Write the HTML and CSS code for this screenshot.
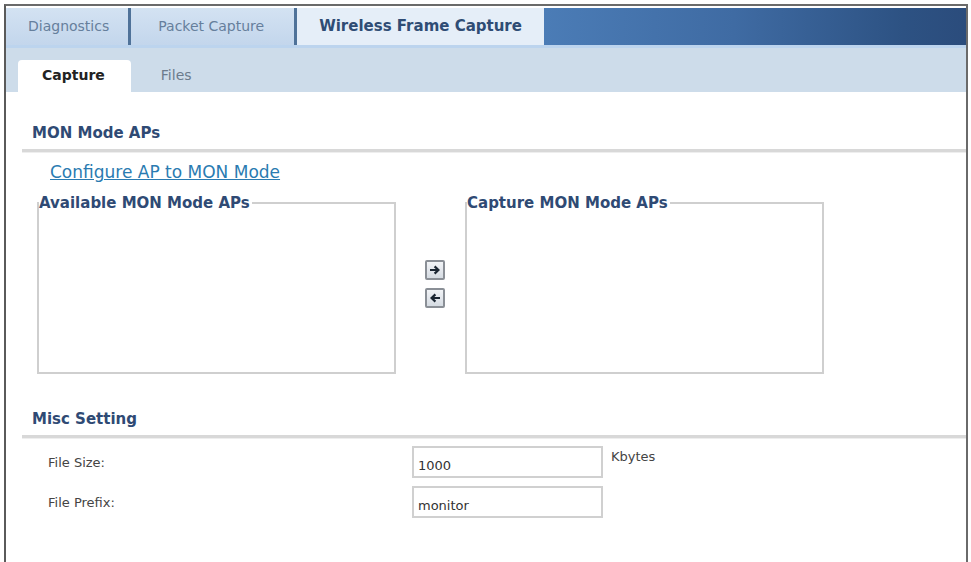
FILE: index.html
```html
<!DOCTYPE html>
<html lang="en">
<head>
  <meta charset="UTF-8">
  <title>Wireless Frame Capture</title>
  <link rel="stylesheet" href="styles.css">
</head>
<body>
  <div class="frame">
    <div class="tabs">
      <div class="tab">Diagnostics</div>
      <div class="tab tab-second">Packet Capture</div>
      <div class="tab active">Wireless Frame Capture</div>
      <div class="tab-fill"></div>
    </div>
    <div class="subtabs">
      <div class="subtab active">Capture</div>
      <div class="subtab">Files</div>
    </div>

    <div class="content">
      <h2 class="section">MON Mode APs</h2>
      <a href="#" class="link">Configure AP to MON Mode</a>

      <div class="lists">
        <fieldset class="list">
          <legend>Available MON Mode APs</legend>
        </fieldset>
        <div class="movers">
          <button class="mover" title="Add">
            <svg width="12" height="10" viewBox="0 0 12 10"><path d="M1 5h8M5.6 1.4L9.4 5 5.6 8.6" fill="none" stroke="#1c2733" stroke-width="2.2"/></svg>
          </button>
          <button class="mover" title="Remove">
            <svg width="12" height="10" viewBox="0 0 12 10"><path d="M11 5H3M6.4 1.4L2.6 5 6.4 8.6" fill="none" stroke="#1c2733" stroke-width="2.2"/></svg>
          </button>
        </div>
        <fieldset class="list">
          <legend>Capture MON Mode APs</legend>
        </fieldset>
      </div>

      <h2 class="section misc">Misc Setting</h2>
      <div class="row first">
        <label class="label">File Size:</label>
        <input class="field" type="text" value="1000">
        <span class="unit">Kbytes</span>
      </div>
      <div class="row">
        <label class="label">File Prefix:</label>
        <input class="field" type="text" value="monitor">
      </div>
    </div>
  </div>
</body>
</html>
```
FILE: styles.css
```css
body {
  margin: 0;
  padding: 4px 0 0 4px;
  background-color: white;
  font-family: 'DejaVu Sans', sans-serif;
  color: #333;
  overflow: hidden;
}
.frame {
  width: 964px;
  height: 558px;
  box-sizing: border-box;
  border-left: 2px solid #5a5a5a;
  border-top: 2px solid #6a6a6a;
  border-right: 2px solid #6a6a6a;
}
.tabs {
  display: flex;
  height: 37px;
  margin-top: 2px;
  background-color: #c7d9ed;
  border-bottom: 3px solid #bcd4ee;
}
.tab {
  padding: 0 19px 0 22px;
  line-height: 37px;
  font-size: 14px;
  color: #667f9c;
  background: linear-gradient(#d3e2f2, #c3d6ec);
  border-right: 3px solid #4f7299;
}
.tab-second {
  padding: 0 30px 0 27px;
}
.tab.active {
  padding: 0 22px;
  font-weight: bold;
  font-size: 15px;
  color: #2f4c74;
  background: #e5eef8;
  border-right: none;
}
.tab-fill {
  flex: 1;
  background: linear-gradient(to right, #4b7cb6, #3f6ba3 45%, #2d5283 85%, #2b4c7c);
}
.subtabs {
  display: flex;
  align-items: flex-end;
  height: 44px;
  background-color: #cddcea;
}
.subtab {
  padding: 0 30px;
  height: 32px;
  line-height: 30px;
  font-size: 14px;
  color: #6b7b8c;
}
.subtab.active {
  margin-left: 12px;
  padding: 0 26px 0 24px;
  background-color: white;
  border-radius: 4px 4px 0 0;
  font-weight: bold;
  color: #222;
}
.content {
  padding: 32px 0 0 16px;
}
.section {
  margin: 0;
  padding: 0 0 7px 10px;
  font-size: 15px;
  line-height: 18px;
  color: #2f4a74;
  border-bottom: 3px solid #d8d8d8;
  box-shadow: 0 1px 0 #eee;
}
.link {
  display: inline-block;
  margin: 10px 0 0 28px;
  font-size: 17px;
  line-height: 20px;
  color: #2a7bb1;
}
.lists {
  display: flex;
  align-items: center;
  margin: 12px 0 0 15px;
}
.list {
  width: 359px;
  height: 180px;
  margin: 0;
  padding: 0;
  box-sizing: border-box;
  border: 2px solid #cfcfcf;
}
.list legend {
  margin-left: 0;
  padding: 0 2px 0 0;
  font-size: 15px;
  line-height: 18px;
  font-weight: bold;
  color: #2f4a74;
}
.movers {
  display: flex;
  flex-direction: column;
  gap: 8px;
  margin: 0 20px 0 29px;
}
.mover {
  width: 20px;
  height: 20px;
  padding: 0;
  display: flex;
  align-items: center;
  justify-content: center;
  border: 2px solid #8a8f96;
  border-radius: 2px;
  background: linear-gradient(#f2f4f7, #d5dbe2);
}
.misc {
  margin-top: 36px;
}
.row {
  display: flex;
  align-items: center;
  margin-top: 8px;
  height: 32px;
}
.row.first {
  margin-top: 8px;
}
.label {
  width: 364px;
  padding-left: 26px;
  font-size: 13px;
  color: #444;
}
.field {
  width: 191px;
  height: 32px;
  box-sizing: border-box;
  border: 2px solid #d0d0d0;
  padding: 7px 4px 0;
  font-family: 'DejaVu Sans', sans-serif;
  font-size: 13px;
  color: #333;
}
.unit {
  align-self: flex-start;
  margin-left: 8px;
  padding-top: 3px;
  font-size: 13px;
  color: #444;
}
```
